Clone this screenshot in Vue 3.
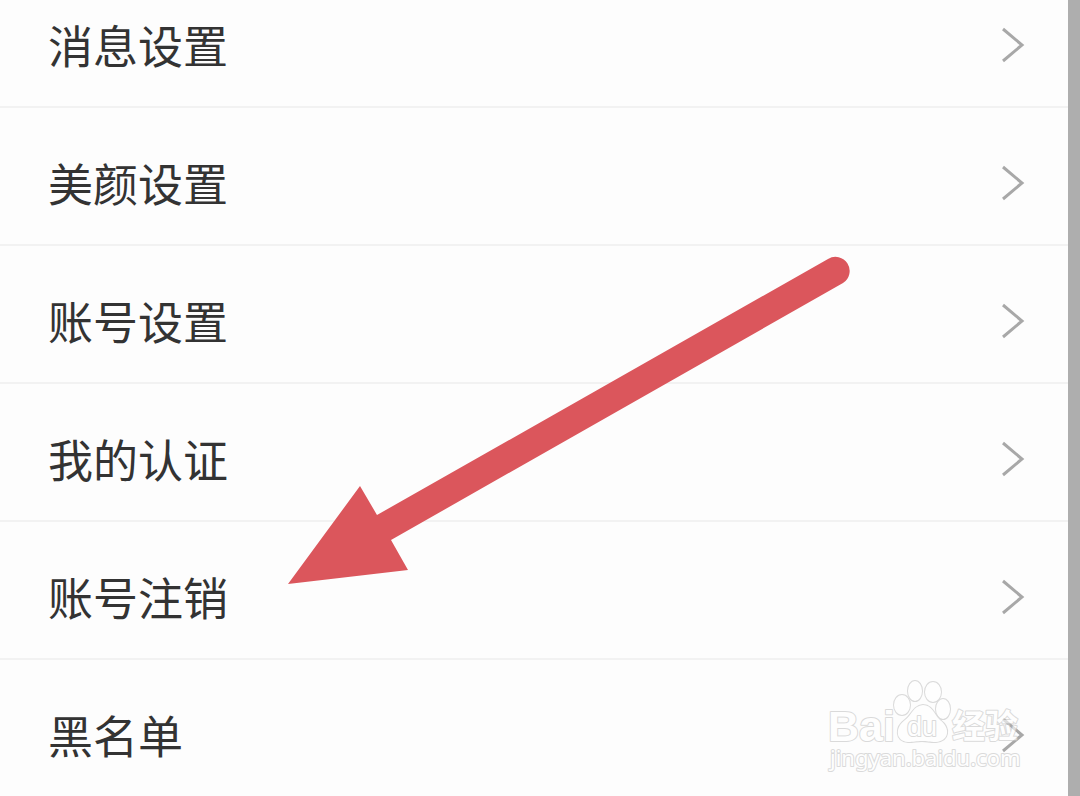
<script setup>
const items = ['消息设置', '美颜设置', '账号设置', '我的认证', '账号注销', '黑名单']
</script>

<template>
  <main class="screen">
    <nav class="list">
      <button v-for="item in items" :key="item" type="button" class="row">
        <span class="label">{{ item }}</span>
        <svg class="chevron" viewBox="0 0 24 36" aria-hidden="true">
          <path d="M2 2 L21 18 L2 34" />
        </svg>
      </button>
    </nav>
    <div class="edge"></div>

    <svg class="arrow" viewBox="0 0 564 330" aria-hidden="true">
      <path d="M0 328 L72 230 L89 259 L540 3 A14 14 0 0 1 555 27 L103 284 L120 314 Z" />
    </svg>

    <svg class="watermark" viewBox="0 0 200 96" aria-hidden="true">
      <g class="outline">
        <text class="brand" x="0" y="61">Bai</text>
        <ellipse cx="74" cy="25" rx="8" ry="10" />
        <ellipse cx="87" cy="11" rx="7" ry="10" />
        <ellipse cx="105" cy="12" rx="8" ry="10" />
        <ellipse cx="115" cy="29" rx="7" ry="10" />
        <path d="M95 25 C104 25 106 34 112 40 C123 48 121 61 108 62 C101 62 99 61 94 61 C88 61 86 62 80 62 C67 61 67 47 77 40 C84 35 85 26 95 25 Z" />
        <text class="du" x="79" y="56">du</text>
        <text class="cjk" x="124" y="58">经验</text>
        <text class="site" x="2" y="86">jingyan.baidu.com</text>
      </g>
    </svg>
  </main>
</template>

<style>
body {
  margin: 0;
  background: #fdfdfd;
}
</style>

<style scoped>
.screen {
  position: relative;
  display: flex;
  height: 100vh;
  overflow: hidden;
  background: #fdfdfd;
  font-family: "Liberation Sans", "Noto Sans CJK SC", sans-serif;
}

.list {
  flex: 1;
  min-width: 0;
}

.row {
  display: flex;
  box-sizing: border-box;
  width: 100%;
  align-items: flex-start;
  justify-content: space-between;
  padding: 46px 43px 24px 48px;
  border: 0;
  border-bottom: 2px solid #f2f2f2;
  background: transparent;
  color: #333;
  font: inherit;
  text-align: left;
  cursor: pointer;
}

.row:first-child {
  padding-top: 16px;
}

.row:last-child {
  border-bottom: 0;
}

.label {
  font-size: 45px;
  line-height: 66px;
}

.chevron {
  width: 24px;
  height: 36px;
  margin-top: 11px;
  fill: none;
  stroke: #a8a8a8;
  stroke-width: 3;
}

.edge {
  width: 12px;
  background: #aeaeae;
}

.arrow {
  position: absolute;
  top: 256px;
  left: 288px;
  width: 564px;
  height: 330px;
  fill: #db565c;
  pointer-events: none;
}

.watermark {
  position: absolute;
  right: 52px;
  bottom: 20px;
  width: 200px;
  height: 96px;
  overflow: visible;
  pointer-events: none;
}

.outline {
  fill: #fff;
  stroke: #c4c4c4;
  stroke-width: 2;
  stroke-linejoin: round;
  paint-order: stroke;
  opacity: 0.6;
}

.brand {
  font-size: 43px;
  font-weight: 700;
}

.du {
  font-size: 27px;
}

.cjk {
  font-family: "Noto Sans CJK SC", sans-serif;
  font-size: 33px;
  font-weight: 700;
}

.site {
  font-family: "Noto Sans", sans-serif;
  font-size: 22px;
}
</style>
